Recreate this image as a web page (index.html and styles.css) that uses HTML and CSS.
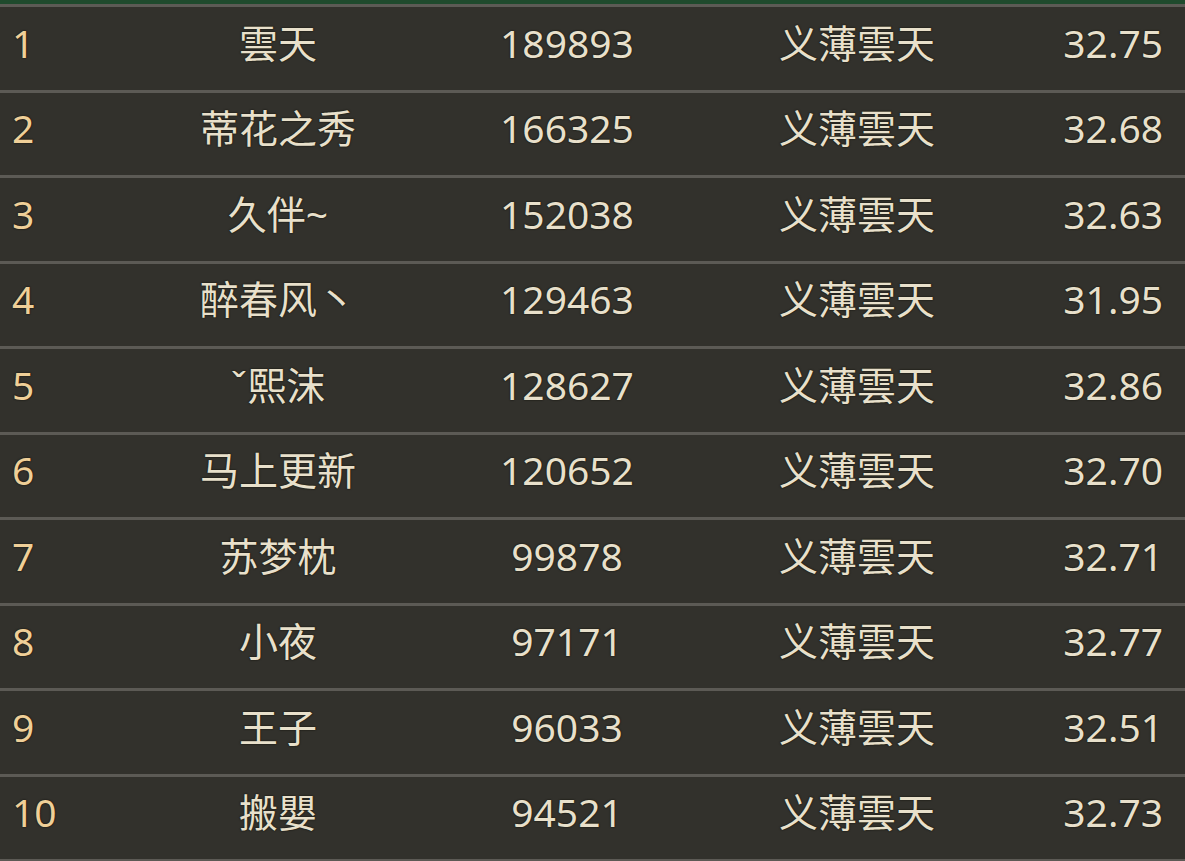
FILE: index.html
```html
<!DOCTYPE html>
<html>
<head>
    <meta charset="UTF-8">
    <title>排行榜</title>
    <link rel="stylesheet" href="styles.css">
</head>
<body>
    <div class="top-bar"></div>
    <div class="rank-table">
        <div class="row"><span class="rank">1</span><span class="name">雲天</span><span class="num">189893</span><span class="guild">义薄雲天</span><span class="score">32.75</span></div>
        <div class="row"><span class="rank">2</span><span class="name">蒂花之秀</span><span class="num">166325</span><span class="guild">义薄雲天</span><span class="score">32.68</span></div>
        <div class="row"><span class="rank">3</span><span class="name">久伴~</span><span class="num">152038</span><span class="guild">义薄雲天</span><span class="score">32.63</span></div>
        <div class="row"><span class="rank">4</span><span class="name">醉春风丶</span><span class="num">129463</span><span class="guild">义薄雲天</span><span class="score">31.95</span></div>
        <div class="row"><span class="rank">5</span><span class="name">ˇ熙沫</span><span class="num">128627</span><span class="guild">义薄雲天</span><span class="score">32.86</span></div>
        <div class="row"><span class="rank">6</span><span class="name">马上更新</span><span class="num">120652</span><span class="guild">义薄雲天</span><span class="score">32.70</span></div>
        <div class="row"><span class="rank">7</span><span class="name">苏梦枕</span><span class="num">99878</span><span class="guild">义薄雲天</span><span class="score">32.71</span></div>
        <div class="row"><span class="rank">8</span><span class="name">小夜</span><span class="num">97171</span><span class="guild">义薄雲天</span><span class="score">32.77</span></div>
        <div class="row"><span class="rank">9</span><span class="name">王子</span><span class="num">96033</span><span class="guild">义薄雲天</span><span class="score">32.51</span></div>
        <div class="row"><span class="rank">10</span><span class="name">搬嬰</span><span class="num">94521</span><span class="guild">义薄雲天</span><span class="score">32.73</span></div>
    </div>
</body>
</html>
```

FILE: styles.css
```css
body {
    margin: 0;
    background: #32312c;
    font-family: "Noto Sans", "Noto Sans CJK SC", sans-serif;
    overflow: hidden;
}
.top-bar {
    height: 4px;
    background: #1f4a2d;
    border-bottom: 3px solid #5c5a55;
}
.row {
    display: grid;
    grid-template-columns: 180px 196px 382px 198px 1fr;
    align-items: center;
    box-sizing: border-box;
    height: 85.5px;
    padding: 0 22px 12px 0;
    border-bottom: 3px solid #5c5a55;
    font-size: 39px;
    line-height: 1;
    color: #e8e0cb;
    text-shadow: 0 0 2px #15140f, 0 0 1px #15140f;
}
.rank {
    padding-left: 12px;
    color: #efcf98;
}
.name,
.num,
.guild {
    text-align: center;
    white-space: nowrap;
}
.score {
    text-align: right;
}
```
